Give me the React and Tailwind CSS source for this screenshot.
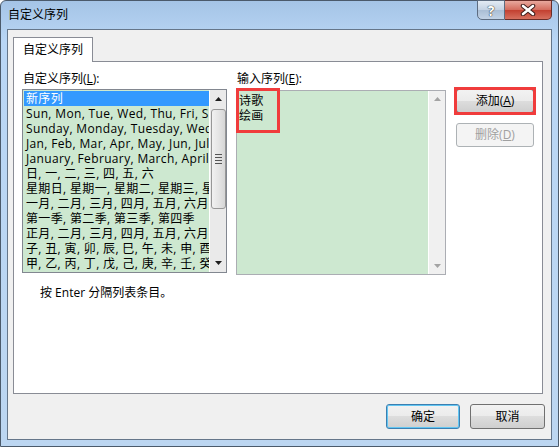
import React from 'react'

const items = [
  '新序列',
  'Sun, Mon, Tue, Wed, Thu, Fri, Sat',
  'Sunday, Monday, Tuesday, Wednesday, Thursday, Friday, Saturday',
  'Jan, Feb, Mar, Apr, May, Jun, Jul, Aug, Sep, Oct, Nov, Dec',
  'January, February, March, April, May, June, July, August, September, October, November, December',
  '日, 一, 二, 三, 四, 五, 六',
  '星期日, 星期一, 星期二, 星期三, 星期四, 星期五, 星期六',
  '一月, 二月, 三月, 四月, 五月, 六月, 七月, 八月, 九月, 十月, 十一月, 十二月',
  '第一季, 第二季, 第三季, 第四季',
  '正月, 二月, 三月, 四月, 五月, 六月, 七月, 八月, 九月, 十月, 冬月, 腊月',
  '子, 丑, 寅, 卯, 辰, 巳, 午, 未, 申, 酉, 戌, 亥',
  '甲, 乙, 丙, 丁, 戊, 己, 庚, 辛, 壬, 癸',
]

const btn =
  'flex items-center justify-center rounded-[3px] border bg-[linear-gradient(to_bottom,#f2f2f2_0%,#ebebeb_50%,#dddddd_50%,#cfcfcf_100%)] text-[12px] text-black'

function Arrow({ up, color = '#1e1e1e' }) {
  return (
    <svg width="7" height="4" viewBox="0 0 7 4">
      <polygon points={up ? '0,4 7,4 3.5,0' : '0,0 7,0 3.5,4'} fill={color} />
    </svg>
  )
}

export default function App() {
  return (
    <div className="w-[559px] h-[447px] flex flex-col rounded-t-[6px] border border-[#4b5a6b] bg-[linear-gradient(to_bottom,#a5c4e6,#b9d6f5_40px,#bcd6f1)] font-['Open_Sans','Noto_Sans_CJK_SC',sans-serif] text-[12px] text-black">
      {/* title bar */}
      <div className="h-[28px] flex items-start justify-between">
        <span className="ml-[7px] mt-[6px] leading-[16px]">自定义序列</span>
        <div className="flex mr-[6px] -mt-px">
          <div className="w-[28px] h-[20px] flex items-center justify-center rounded-bl-[5px] border border-[#5d6c80] bg-[linear-gradient(to_bottom,#e3ebf4,#c3d2e3_50%,#a9bdd4_50%,#c2d3e6)] text-white font-bold text-[14px] [text-shadow:0_0_1px_#222,0_0_1px_#222]">
            ?
          </div>
          <div className="w-[47px] h-[20px] flex items-center justify-center rounded-br-[5px] border border-l-0 border-[#6a2d28] bg-[linear-gradient(to_bottom,#e8a89d,#d36b5c_50%,#c23f2f_50%,#d6705f)]">
            <svg width="16" height="12" viewBox="0 0 16 12">
              <path d="M3 2 L13 10 M13 2 L3 10" stroke="#3a1a18" strokeWidth="4.5" strokeLinecap="round" />
              <path d="M3 2 L13 10 M13 2 L3 10" stroke="#fff" strokeWidth="2.6" strokeLinecap="round" />
            </svg>
          </div>
        </div>
      </div>

      {/* client area */}
      <div className="flex-1 mx-[6px] mb-[6px] border border-[#65768a] bg-[#f0f0f0] flex flex-col">
        <div className="ml-[5px] mt-[7px] relative z-10 -mb-px w-[80px] h-[25px] border border-b-0 border-[#898c95] bg-white flex items-center pl-[9px]">
          自定义序列
        </div>
        <div className="ml-[5px] w-[530px] h-[333px] border border-[#898c95] bg-white pt-[9px] pl-[8px]">
          <div className="flex">
            {/* left column */}
            <div className="flex flex-col">
              <div className="h-[16px] leading-[16px] pl-px">
                自定义序列(<span className="underline">L</span>):
              </div>
              <div className="mt-[2px] w-[205px] h-[184px] border border-[#828790] bg-[#cde8d0] flex">
                <div className="flex-1 overflow-hidden pt-px pl-px tracking-[0.35px]">
                  {items.map((t, i) => (
                    <div
                      key={i}
                      className={
                        'h-[15px] leading-[15px] whitespace-nowrap overflow-hidden pl-[2px] ' +
                        (i === 0 ? 'bg-[#3399ff] text-white' : '')
                      }
                    >
                      {t}
                    </div>
                  ))}
                </div>
                <div className="w-[17px] bg-[#eaeaea] border-l border-white flex flex-col items-center">
                  <div className="h-[18px] flex items-center justify-center">
                    <Arrow up />
                  </div>
                  <div className="mt-px w-[15px] h-[100px] rounded-[3px] border border-[#979797] bg-[linear-gradient(to_right,#f1f1f1,#e5e5e5_50%,#d6d6d6)] flex flex-col items-center justify-center gap-[2px]">
                    <div className="w-[7px] h-px bg-[#555]" />
                    <div className="w-[7px] h-px bg-[#555]" />
                    <div className="w-[7px] h-px bg-[#555]" />
                    <div className="w-[7px] h-px bg-[#555]" />
                  </div>
                  <div className="flex-1" />
                  <div className="h-[18px] flex items-center justify-center">
                    <Arrow />
                  </div>
                </div>
              </div>
            </div>

            {/* right column */}
            <div className="ml-[9px] flex flex-col">
              <div className="h-[16px] leading-[16px] pl-px">
                输入序列(<span className="underline">E</span>):
              </div>
              <div className="relative mt-[3px] w-[210px] h-[185px] border border-[#abadb3] bg-[#cde8d0] flex">
                <div className="flex-1 pt-[2px] pl-[2px] tracking-[0.35px]">
                  <div className="h-[15px] leading-[15px]">诗歌</div>
                  <div className="h-[15px] leading-[15px]">绘画</div>
                </div>
                <div className="w-[17px] bg-[#f0f0f0] border-l border-white flex flex-col items-center justify-between py-[6px]">
                  <Arrow up color="#a3a3a3" />
                  <Arrow color="#a3a3a3" />
                </div>
                <div className="absolute -left-[1px] -top-[3px] w-[44px] h-[45px] border-[3px] border-[#f03c3c]" />
              </div>
            </div>

            {/* buttons */}
            <div className="ml-[10px] pt-[18px] flex flex-col gap-[10px]">
              <div className="relative">
                <div className={btn + ' w-[78px] h-[24px] border-[#707070]'}>
                  添加(<span className="underline">A</span>)
                </div>
                <div className="absolute -left-[2px] -top-[2px] w-[82px] h-[28px] border-[3px] border-[#f03c3c]" />
              </div>
              <div className="w-[78px] h-[24px] flex items-center justify-center rounded-[3px] border border-[#adb2b5] bg-[#f4f4f4] text-[#a0a0a0]">
                删除(<span className="underline">D</span>)
              </div>
            </div>
          </div>
          <div className="mt-[10px] pl-[18px] h-[16px] leading-[16px]">按 Enter 分隔列表条目。</div>
        </div>

        <div className="mt-[10px] mr-[6px] flex justify-end gap-[10px]">
          <div className={btn + ' w-[74px] h-[25px] border-[#3c7fb1] shadow-[inset_0_0_0_1px_#62c6f2]'}>确定</div>
          <div className={btn + ' w-[75px] h-[25px] border-[#707070]'}>取消</div>
        </div>
      </div>
    </div>
  )
}
